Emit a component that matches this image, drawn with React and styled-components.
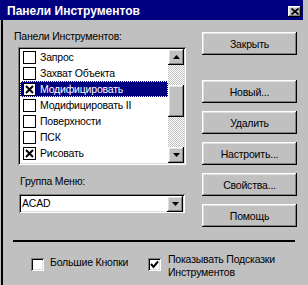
import React from 'react'
import styled, { createGlobalStyle, css } from 'styled-components'

const GlobalStyle = createGlobalStyle`
  html, body {
    margin: 0;
    padding: 0;
    background: #c0c0c0;
  }
  body {
    font-family: "Liberation Sans", Arial, sans-serif;
    font-size: 10.5px;
    letter-spacing: -0.2px;
    color: #000;
  }
`

const raised = css`
  background: #c0c0c0;
  box-shadow: inset -1px -1px #000, inset 1px 1px #fff, inset -2px -2px #808080, inset 2px 2px #dfdfdf;
`

const sunken = css`
  background: #fff;
  box-shadow: inset 1px 1px #808080, inset -1px -1px #fff, inset 2px 2px #000, inset -2px -2px #dfdfdf;
`

const Window = styled.div`
  width: 308px;
  height: 285px;
  overflow: hidden;
  background: #c0c0c0;
  display: flex;
  flex-direction: column;
`

const TitleBar = styled.div`
  height: 20px;
  margin-right: 5px;
  background: #000080;
  display: flex;
  align-items: flex-start;
  padding: 0 2px 0 7px;
  flex-shrink: 0;
`

const Title = styled.div`
  flex: 1;
  color: #fff;
  font-weight: bold;
  font-size: 12px;
  letter-spacing: 0;
  line-height: 14px;
  padding-top: 4px;
  white-space: nowrap;
`

const CloseButton = styled.div`
  ${raised};
  width: 13px;
  height: 11px;
  margin-top: 6px;
  display: flex;
  align-items: center;
  justify-content: center;
`

const Body = styled.div`
  flex: 1;
  margin-left: 1px;
  border-left: 2px solid #000;
  display: flex;
  flex-direction: column;
`

const TopSection = styled.div`
  display: flex;
  padding-top: 10px;
`

const LeftCol = styled.div`
  margin-left: 11px;
  width: 172px;
  display: flex;
  flex-direction: column;
`

const Label = styled.div`
  line-height: 13px;
  margin-left: ${p => p.$indent || 0}px;
  white-space: nowrap;
`

const ListBox = styled.div`
  ${sunken};
  margin: 4px 0 0 4px;
  width: 168px;
  height: 118px;
  box-sizing: border-box;
  padding: 2px;
  display: flex;
`

const Rows = styled.div`
  flex: 1;
  display: flex;
  flex-direction: column;
`

const Row = styled.div`
  height: 16px;
  box-sizing: border-box;
  display: flex;
  align-items: center;
  padding-left: 3px;
  white-space: nowrap;
  background: ${p => (p.$selected ? '#000080' : 'transparent')};
  color: ${p => (p.$selected ? '#fff' : '#000')};
  outline: ${p => (p.$selected ? '1px dotted #ffff99' : 'none')};
  outline-offset: -1px;
`

const ListCheck = styled.div`
  width: 13px;
  height: 13px;
  box-sizing: border-box;
  border: 1px solid #000;
  background: #fff;
  display: flex;
  align-items: center;
  justify-content: center;
  flex-shrink: 0;
`

const RowText = styled.span`
  margin-left: 4px;
  line-height: 16px;
`

const ScrollBar = styled.div`
  width: 16px;
  display: flex;
  flex-direction: column;
`

const ScrollButton = styled.div`
  ${raised};
  width: 16px;
  height: 16px;
  display: flex;
  align-items: center;
  justify-content: center;
  flex-shrink: 0;
`

const Track = styled.div`
  flex: 1;
  background: repeating-conic-gradient(#c0c0c0 0 25%, #fff 0 50%) 0 0 / 2px 2px;
`

const Thumb = styled.div`
  ${raised};
  height: 32px;
  margin-top: 20px;
`

const Combo = styled.div`
  ${sunken};
  margin: 6px 0 0 5px;
  width: 166px;
  height: 19px;
  box-sizing: border-box;
  padding: 2px;
  display: flex;
  align-items: center;
`

const ComboText = styled.div`
  flex: 1;
  padding-left: 1px;
  line-height: 15px;
`

const RightCol = styled.div`
  margin: 2px 0 0 16px;
  width: 95px;
  display: flex;
  flex-direction: column;
`

const Button = styled.div`
  ${raised};
  height: 23px;
  display: flex;
  align-items: center;
  justify-content: center;
  margin-top: ${p => p.$gap}px;
`

const Separator = styled.div`
  margin: 13px 0 0 10px;
  width: 282px;
  height: 2px;
  background: #000;
`

const BottomRow = styled.div`
  display: flex;
  align-items: flex-start;
  padding-top: 11px;
`

const Option = styled.div`
  display: flex;
  align-items: flex-start;
  width: ${p => (p.$width ? `${p.$width}px` : 'auto')};
  margin-left: ${p => p.$left || 0}px;
`

const Check3D = styled.div`
  ${sunken};
  width: 13px;
  height: 13px;
  margin-top: 5px;
  flex-shrink: 0;
  display: flex;
  align-items: center;
  justify-content: center;
`

const OptionText = styled.div`
  line-height: 13px;
  margin-left: ${p => p.$gap}px;
  margin-top: ${p => p.$top}px;
  max-width: 125px;
`

const Arrow = ({ up }) => (
  <svg width="7" height="4" viewBox="0 0 7 4">
    <polygon points={up ? '3.5,0 7,4 0,4' : '0,0 7,0 3.5,4'} fill="#000" />
  </svg>
)

const CrossMark = () => (
  <svg width="9" height="9" viewBox="0 0 9 9">
    <path d="M1 1 L8 8 M8 1 L1 8" stroke="#000" strokeWidth="2" />
  </svg>
)

const CloseMark = () => (
  <svg width="8" height="7" viewBox="0 0 8 7">
    <path d="M0.5 0.5 L7.5 6.5 M7.5 0.5 L0.5 6.5" stroke="#000" strokeWidth="1.6" />
  </svg>
)

const TickMark = () => (
  <svg width="9" height="9" viewBox="0 0 9 9">
    <polyline points="1,4 3.5,7 8,1.5" fill="none" stroke="#000" strokeWidth="2" />
  </svg>
)

const toolbars = [
  { name: 'Запрос', checked: false },
  { name: 'Захват Объекта', checked: false },
  { name: 'Модифицировать', checked: true, selected: true },
  { name: 'Модифицировать II', checked: false },
  { name: 'Поверхности', checked: false },
  { name: 'ПСК', checked: false },
  { name: 'Рисовать', checked: true },
]

const buttons = [
  { label: 'Закрыть', gap: 0 },
  { label: 'Новый...', gap: 25 },
  { label: 'Удалить', gap: 8 },
  { label: 'Настроить...', gap: 8 },
  { label: 'Свойства...', gap: 8 },
  { label: 'Помощь', gap: 8 },
]

export default function App() {
  return (
    <Window>
      <GlobalStyle />
      <TitleBar>
        <Title>Панели Инструментов</Title>
        <CloseButton>
          <CloseMark />
        </CloseButton>
      </TitleBar>
      <Body>
        <TopSection>
          <LeftCol>
            <Label>Панели Инструментов:</Label>
            <ListBox>
              <Rows>
                {toolbars.map(t => (
                  <Row key={t.name} $selected={t.selected}>
                    <ListCheck>{t.checked && <CrossMark />}</ListCheck>
                    <RowText>{t.name}</RowText>
                  </Row>
                ))}
              </Rows>
              <ScrollBar>
                <ScrollButton>
                  <Arrow up />
                </ScrollButton>
                <Track>
                  <Thumb />
                </Track>
                <ScrollButton>
                  <Arrow />
                </ScrollButton>
              </ScrollBar>
            </ListBox>
            <Label $indent={6} style={{ marginTop: 10 }}>Группа Меню:</Label>
            <Combo>
              <ComboText>ACAD</ComboText>
              <ScrollButton>
                <Arrow />
              </ScrollButton>
            </Combo>
          </LeftCol>
          <RightCol>
            {buttons.map(b => (
              <Button key={b.label} $gap={b.gap}>{b.label}</Button>
            ))}
          </RightCol>
        </TopSection>
        <Separator />
        <BottomRow>
          <Option $left={28} $width={117}>
            <Check3D />
            <OptionText $gap={6} $top={3}>Большие Кнопки</OptionText>
          </Option>
          <Option>
            <Check3D>
              <TickMark />
            </Check3D>
            <OptionText $gap={7} $top={0}>Показывать Подсказки Инструментов</OptionText>
          </Option>
        </BottomRow>
      </Body>
    </Window>
  )
}
